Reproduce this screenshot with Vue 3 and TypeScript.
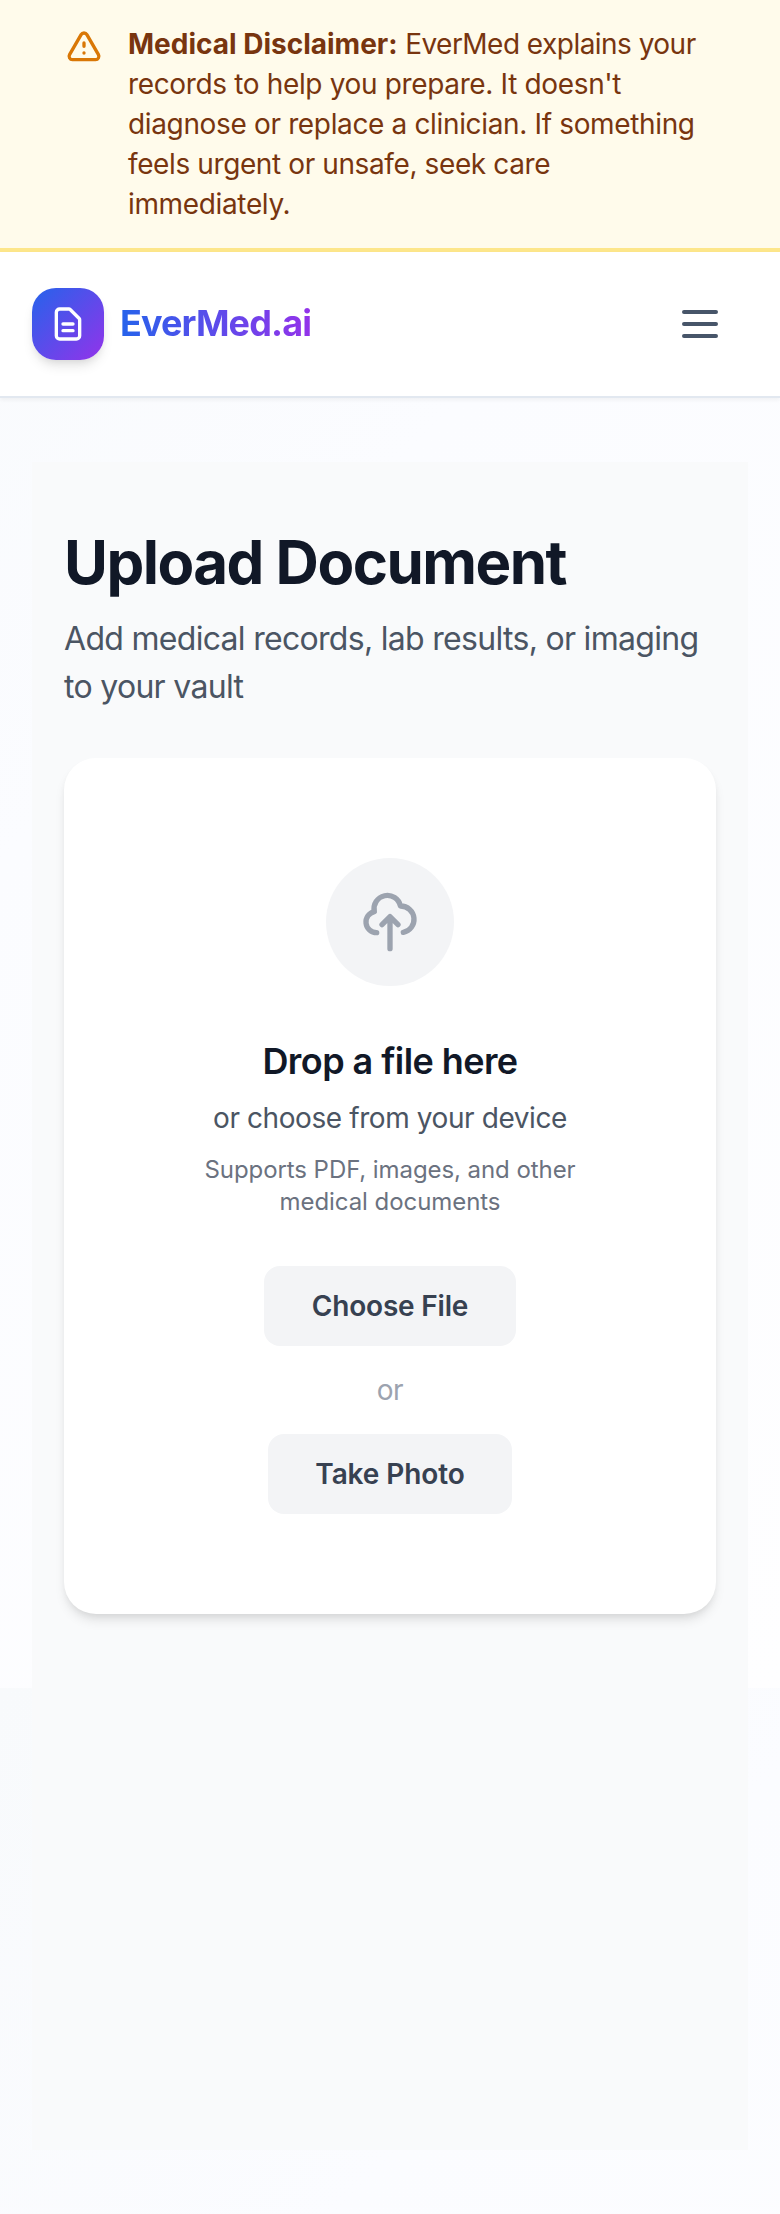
<script setup lang="ts">
import { ref } from 'vue'

const menuOpen = ref(false)
</script>

<template>
  <div class="page">
    <aside class="notice" role="note">
      <svg class="notice-icon" viewBox="0 0 24 24" aria-hidden="true">
        <path d="M12 9v2m0 4h.01m-6.938 4h13.856c1.54 0 2.502-1.667 1.732-3L13.732 4c-.77-1.333-2.694-1.333-3.464 0L3.34 16c-.77 1.333.192 3 1.732 3z" />
      </svg>
      <p class="notice-text">
        <strong>Medical Disclaimer:</strong> <span class="lead">EverMed explains your</span><br />
        records to help you prepare. It doesn't<br />
        diagnose or replace a clinician. If something<br />
        <span class="urgent">feels urgent or unsafe, seek care</span><br />
        immediately.
      </p>
    </aside>

    <header class="topbar">
      <a class="brand">
        <span class="brand-mark">
          <svg viewBox="0 0 24 24" aria-hidden="true">
            <path d="M9 12h6m-6 4h6m2 5H7a2 2 0 01-2-2V5a2 2 0 012-2h5.586a1 1 0 01.707.293l5.414 5.414a1 1 0 01.293.707V19a2 2 0 01-2 2z" />
          </svg>
        </span>
        <span class="brand-name">EverMed.ai</span>
      </a>
      <button class="menu" type="button" aria-label="Menu" :aria-expanded="menuOpen" @click="menuOpen = !menuOpen">
        <svg viewBox="0 0 24 24" aria-hidden="true">
          <path d="M4 6h16M4 12h16M4 18h16" />
        </svg>
      </button>
    </header>

    <div class="backdrop">
      <main class="content">
        <h1>Upload Document</h1>
        <p class="subtitle">Add medical records, lab results, or imaging<br />to your vault</p>

        <section class="card">
          <div class="circle">
            <svg viewBox="0 0 24 24" aria-hidden="true">
              <path d="M7 16a4 4 0 01-.88-7.903A5 5 0 1115.9 6L16 6a5 5 0 011 9.9M15 13l-3-3m0 0l-3 3m3-3v12" />
            </svg>
          </div>
          <h2>Drop a file here</h2>
          <p class="hint">or choose from your device</p>
          <p class="formats">Supports PDF, images, and other<br />medical documents</p>
          <button class="action choose" type="button">Choose File</button>
          <span class="or">or</span>
          <button class="action photo" type="button">Take Photo</button>
        </section>
      </main>
    </div>
  </div>
</template>

<style>
body {
  margin: 0;
}
</style>

<style scoped>
.page {
  box-sizing: border-box;
  height: 2214px;
  overflow: hidden;
  display: flex;
  flex-direction: column;
  font-family: Inter, "Liberation Sans", sans-serif;
  background: linear-gradient(135deg, #f8fafc 0%, #fbfcff 35%, #fefeff 100%) 0 0 / 100% 1688px;
}

h1,
h2,
p {
  margin: 0;
  white-space: nowrap;
}

svg {
  display: block;
  fill: none;
  stroke: currentColor;
  stroke-width: 2;
  stroke-linecap: round;
  stroke-linejoin: round;
}

.notice {
  display: flex;
  gap: 24px;
  padding: 24px 64px;
  background: #fffbeb;
  border-bottom: 4px solid #fde68a;
  color: #78350f;
}

.notice-icon {
  flex: none;
  width: 40px;
  height: 40px;
  margin-top: 4px;
  color: #d97706;
}

.notice-text {
  font-size: 28px;
  line-height: 40px;
  letter-spacing: -0.35px;
}

.notice-text strong {
  font-weight: 700;
  letter-spacing: 0;
}

.lead {
  letter-spacing: -0.53px;
}

.urgent {
  letter-spacing: -0.39px;
}

.topbar {
  box-sizing: border-box;
  flex: none;
  height: 146px;
  display: flex;
  align-items: center;
  justify-content: space-between;
  padding: 0 56px 0 32px;
  background: #fff;
  border-bottom: 2px solid #e2e8f0;
  box-shadow: 0 2px 4px rgba(0, 0, 0, 0.05);
}

.brand {
  display: flex;
  align-items: center;
  gap: 16px;
}

.brand-mark {
  display: grid;
  place-items: center;
  width: 72px;
  height: 72px;
  border-radius: 24px;
  color: #fff;
  background: linear-gradient(135deg, #2563eb, #9333ea);
  box-shadow: 0 8px 12px -2px rgba(0, 0, 0, 0.1), 0 4px 8px -4px rgba(0, 0, 0, 0.1);
}

.brand-mark svg {
  width: 40px;
  height: 40px;
}

.brand-name {
  padding-bottom: 2px;
  font-size: 36px;
  line-height: 54px;
  font-weight: 700;
  letter-spacing: -0.88px;
  color: transparent;
  background: linear-gradient(90deg, #2563eb, #9333ea);
  -webkit-background-clip: text;
  background-clip: text;
}

.menu {
  padding: 0;
  border: 0;
  background: none;
  color: #475569;
}

.menu svg {
  width: 48px;
  height: 48px;
}

.backdrop {
  padding: 64px 32px;
}

.content {
  box-sizing: border-box;
  height: 1688px;
  padding: 64px 32px;
  background: #f9fafb;
}

h1 {
  font-size: 60px;
  line-height: 72px;
  font-weight: 700;
  letter-spacing: -1.52px;
  color: #111827;
}

.subtitle {
  margin-top: 17px;
  font-size: 32px;
  line-height: 48px;
  letter-spacing: -0.7px;
  color: #4b5563;
}

.card {
  display: flex;
  flex-direction: column;
  align-items: center;
  margin-top: 47px;
  padding: 100px 0;
  border-radius: 32px;
  background: #fff;
  box-shadow: 0 8px 12px -2px rgba(0, 0, 0, 0.1), 0 4px 8px -4px rgba(0, 0, 0, 0.1);
  text-align: center;
}

.circle {
  display: grid;
  place-items: center;
  width: 128px;
  height: 128px;
  border-radius: 50%;
  background: #f3f4f6;
  color: #9ca3af;
}

.circle svg {
  width: 64px;
  height: 64px;
}

h2 {
  margin-top: 48px;
  font-size: 36px;
  line-height: 54px;
  font-weight: 600;
  letter-spacing: -0.57px;
  color: #111827;
}

.hint {
  margin-top: 10px;
  font-size: 28px;
  line-height: 40px;
  letter-spacing: -0.41px;
  color: #4b5563;
}

.formats {
  margin-top: 16px;
  font-size: 24px;
  line-height: 32px;
  letter-spacing: -0.07px;
  color: #6b7280;
}

.action {
  height: 80px;
  padding: 0;
  border: 0;
  border-radius: 16px;
  background: #f3f4f6;
  color: #374151;
  font: 600 28px/40px Inter, "Liberation Sans", sans-serif;
}

.choose {
  width: 252px;
  margin-top: 48px;
  letter-spacing: -0.2px;
}

.or {
  margin: 24px 0;
  font-size: 28px;
  line-height: 40px;
  letter-spacing: -0.4px;
  color: #9ca3af;
}

.photo {
  width: 244px;
  letter-spacing: -0.1px;
}
</style>
